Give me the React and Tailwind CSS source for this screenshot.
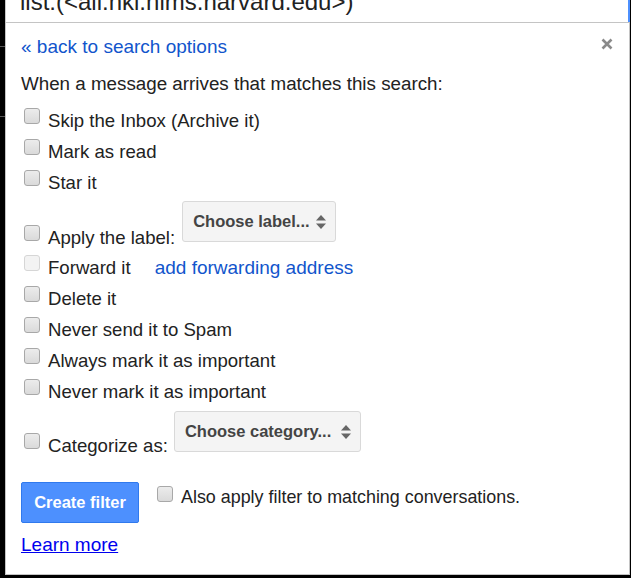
import React from "react";

function Box({ disabled = false, className = "" }) {
  return (
    <span
      className={
        "block w-[16px] h-[16px] shrink-0 rounded-[3px] border " +
        (disabled
          ? "border-[#d6d6d6] bg-[#f3f3f3] "
          : "border-[#a8a8a8] bg-gradient-to-b from-[#ececec] to-[#dadada] ") +
        className
      }
    />
  );
}

function Row({ label, disabled = false, children }) {
  return (
    <div className="flex items-start h-[31px]">
      <Box disabled={disabled} className="ml-[3px] mt-[3px]" />
      <span className="ml-[8px] leading-[31px] text-[#222] whitespace-nowrap">{label}</span>
      {children}
    </div>
  );
}

function Arrows() {
  return (
    <svg width="10" height="16" viewBox="0 0 10 16" className="shrink-0">
      <path d="M5 1 L10 6.5 L0 6.5 Z" fill="#666" />
      <path d="M5 15 L10 9.5 L0 9.5 Z" fill="#666" />
    </svg>
  );
}

function Select({ text, width }) {
  return (
    <div
      className={
        "flex items-center justify-between h-[41px] rounded-[3px] border border-[#d9d9d9] bg-[#f4f4f4] pl-[10px] pr-[9px] " +
        width
      }
    >
      <span className="font-bold text-[16.5px] text-[#444] whitespace-nowrap leading-none">{text}</span>
      <Arrows />
    </div>
  );
}

export default function App() {
  return (
    <div className="w-[631px] h-[578px] bg-black flex overflow-hidden font-['Liberation_Sans',Arial,sans-serif] text-[18.6px]">
      <div className="w-[5px] shrink-0 flex flex-col">
        <div className="h-[46px]" />
        <div className="h-px bg-[#555]" />
        <div className="h-[69px]" />
        <div className="h-px bg-[#555]" />
      </div>
      <div className="w-[625px] h-[575px] flex flex-col shrink-0">
        <div className="h-[22px] shrink-0 bg-white border-l border-l-[#c8c8c8] border-r-2 border-r-[#4d90fe] overflow-hidden pl-[14px]">
          <div className="text-[24px] leading-[24px] text-[#222] -mt-[10px] whitespace-nowrap">
            list:(&lt;all.nki.nims.harvard.edu&gt;)
          </div>
        </div>
        <div className="relative flex-1 bg-white border border-[#c4c4c4] pl-[15px] pt-[13px]">
          <button className="absolute top-[15px] right-[16px] w-[12px] h-[12px]" aria-label="Close">
            <svg width="12" height="12" viewBox="0 0 12 12">
              <path d="M1.5 1.5 L10.5 10.5 M10.5 1.5 L1.5 10.5" stroke="#8a8a8a" strokeWidth="2.6" strokeLinecap="butt" />
            </svg>
          </button>

          <div className="h-[22px] leading-[22px] text-[19px]">
            <a className="text-[#1155cc] cursor-pointer whitespace-nowrap">« back to search options</a>
          </div>
          <div className="mt-[15px] h-[22px] leading-[22px] text-[18.8px] text-[#222] whitespace-nowrap">
            When a message arrives that matches this search:
          </div>

          <div className="mt-[10px] flex flex-col">
            <Row label="Skip the Inbox (Archive it)" />
            <Row label="Mark as read" />
            <Row label="Star it" />

            <div className="flex items-start h-[54px]">
              <Box className="ml-[3px] mt-[27px]" />
              <span className="ml-[8px] mt-[23.5px] leading-[31px] text-[#222] whitespace-nowrap">Apply the label:</span>
              <div className="ml-[7px] mt-[3px]">
                <Select text="Choose label..." width="w-[154px]" />
              </div>
            </div>

            <Row label="Forward it" disabled>
              <a className="ml-[24px] leading-[31px] text-[19px] text-[#1155cc] cursor-pointer whitespace-nowrap">add forwarding address</a>
            </Row>
            <Row label="Delete it" />
            <Row label="Never send it to Spam" />
            <Row label="Always mark it as important" />
            <Row label="Never mark it as important" />

            <div className="flex items-start h-[54px]">
              <Box className="ml-[3px] mt-[26px]" />
              <span className="ml-[8px] mt-[22.5px] leading-[31px] text-[#222] whitespace-nowrap">Categorize as:</span>
              <div className="ml-[6px] mt-[4px]">
                <Select text="Choose category..." width="w-[187px]" />
              </div>
            </div>
          </div>

          <div className="mt-[21px] flex items-start">
            <button className="w-[118px] h-[41px] rounded-[2px] border border-[#3079ed] bg-[#4d90fe] text-white font-bold text-[16.5px]">
              Create filter
            </button>
            <Box className="ml-[18px] mt-[4px]" />
            <span className="ml-[8px] leading-[31px] text-[17.9px] text-[#222] whitespace-nowrap">
              Also apply filter to matching conversations.
            </span>
          </div>

          <div className="mt-[11px] h-[22px] leading-[22px] text-[19px]">
            <a className="text-[#0000ee] underline cursor-pointer">Learn more</a>
          </div>
        </div>
      </div>
    </div>
  );
}
